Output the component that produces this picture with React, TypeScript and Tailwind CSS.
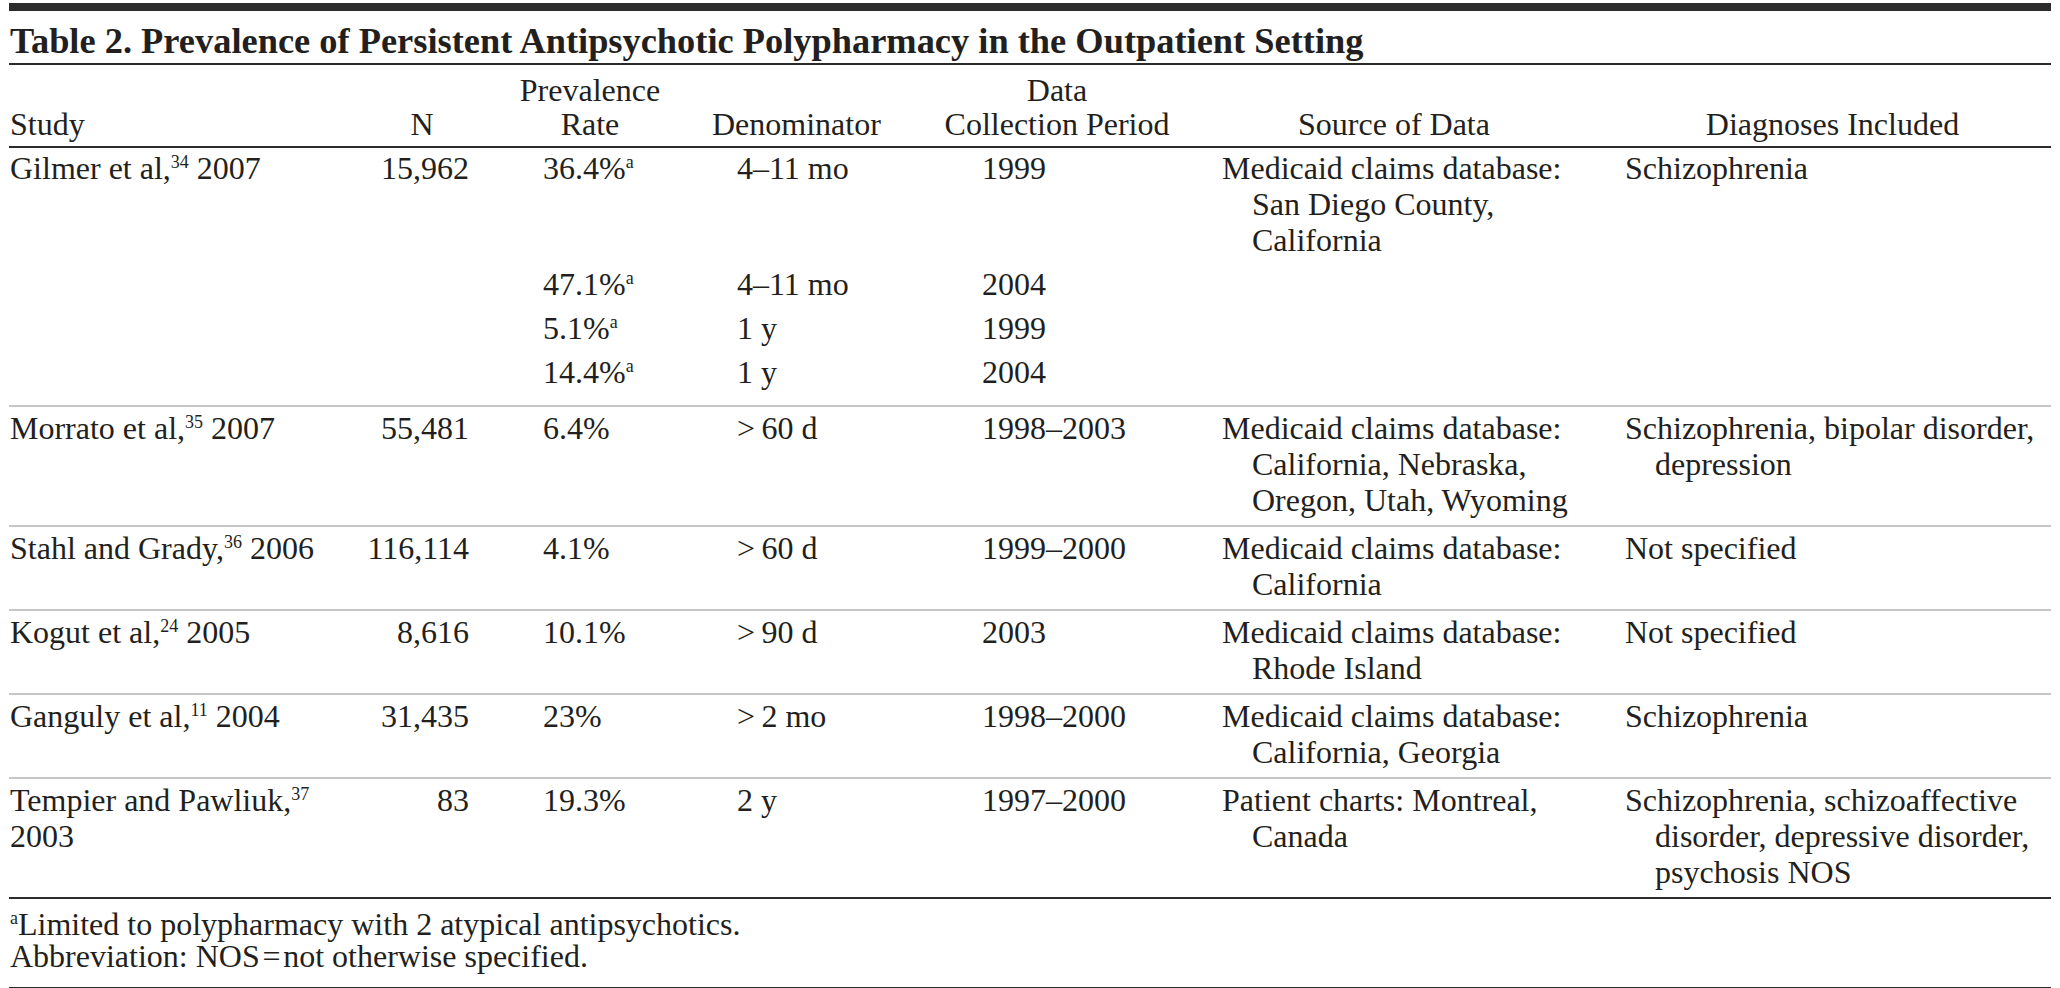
import React from 'react';

type Cell = React.ReactNode;

interface Row {
  study?: Cell[];
  n?: string;
  rate?: Cell;
  denom?: string;
  period?: string;
  source?: string[];
  diag?: string[];
  pad: string;
  rule: string;
}

const Sup = ({ children }: { children: React.ReactNode }) => (
  <sup className="text-[18px] -top-[11px]">{children}</sup>
);

const rows: Row[] = [
  {
    study: [<>Gilmer et al,<Sup>34</Sup> 2007</>],
    n: '15,962',
    rate: <>36.4%<Sup>a</Sup></>,
    denom: '4–11 mo',
    period: '1999',
    source: ['Medicaid claims database:', 'San Diego County,', 'California'],
    diag: ['Schizophrenia'],
    pad: 'pt-[2px] pb-[6px]',
    rule: '',
  },
  { rate: <>47.1%<Sup>a</Sup></>, denom: '4–11 mo', period: '2004', pad: 'pt-[2px] pb-[6px]', rule: '' },
  { rate: <>5.1%<Sup>a</Sup></>, denom: '1 y', period: '1999', pad: 'pt-[2px] pb-[6px]', rule: '' },
  {
    rate: <>14.4%<Sup>a</Sup></>,
    denom: '1 y',
    period: '2004',
    pad: 'pt-[2px] pb-[15px]',
    rule: 'border-b-2 border-[#c6c6c6]',
  },
  {
    study: [<>Morrato et al,<Sup>35</Sup> 2007</>],
    n: '55,481',
    rate: '6.4%',
    denom: '>\u200960 d',
    period: '1998–2003',
    source: ['Medicaid claims database:', 'California, Nebraska,', 'Oregon, Utah, Wyoming'],
    diag: ['Schizophrenia, bipolar disorder,', 'depression'],
    pad: 'pt-[3px] pb-[7px]',
    rule: 'border-b-2 border-[#c6c6c6]',
  },
  {
    study: [<>Stahl and Grady,<Sup>36</Sup> 2006</>],
    n: '116,114',
    rate: '4.1%',
    denom: '>\u200960 d',
    period: '1999–2000',
    source: ['Medicaid claims database:', 'California'],
    diag: ['Not specified'],
    pad: 'pt-[3px] pb-[7px]',
    rule: 'border-b-2 border-[#c6c6c6]',
  },
  {
    study: [<>Kogut et al,<Sup>24</Sup> 2005</>],
    n: '8,616',
    rate: '10.1%',
    denom: '>\u200990 d',
    period: '2003',
    source: ['Medicaid claims database:', 'Rhode Island'],
    diag: ['Not specified'],
    pad: 'pt-[3px] pb-[7px]',
    rule: 'border-b-2 border-[#c6c6c6]',
  },
  {
    study: [<>Ganguly et al,<Sup>11</Sup> 2004</>],
    n: '31,435',
    rate: '23%',
    denom: '>\u20092 mo',
    period: '1998–2000',
    source: ['Medicaid claims database:', 'California, Georgia'],
    diag: ['Schizophrenia'],
    pad: 'pt-[3px] pb-[7px]',
    rule: 'border-b-2 border-[#c6c6c6]',
  },
  {
    study: [<>Tempier and Pawliuk,<Sup>37</Sup></>, '2003'],
    n: '83',
    rate: '19.3%',
    denom: '2 y',
    period: '1997–2000',
    source: ['Patient charts: Montreal,', 'Canada'],
    diag: ['Schizophrenia, schizoaffective', 'disorder, depressive disorder,', 'psychosis NOS'],
    pad: 'pt-[3px] pb-[7px]',
    rule: 'border-b-2 border-[#2b2b2b]',
  },
];

// first line flush, the rest hang in
function Lines({ lines }: { lines?: string[] }) {
  if (!lines) return null;
  return (
    <>
      {lines.map((l, i) => (
        <div key={i} className={i > 0 ? 'pl-[30px]' : ''}>
          {l}
        </div>
      ))}
    </>
  );
}

export default function App() {
  return (
    <div className="min-h-screen bg-white px-[9px] pt-[3px] text-[#231f20] font-['Liberation_Serif',serif]">
      <div className="h-[8px] bg-[#2b2b2b]" />
      <h1 className="mt-[8px] h-[44px] pl-[1px] text-[36.4px] leading-[44px] font-bold whitespace-nowrap border-b-2 border-[#2b2b2b] box-content">
        Table 2. Prevalence of Persistent Antipsychotic Polypharmacy in the Outpatient Setting
      </h1>

      <table className="w-full table-fixed text-[32px] leading-[36px]">
        <colgroup>
          <col className="w-[355px]" />
          <col className="w-[116px]" />
          <col className="w-[220px]" />
          <col className="w-[176px]" />
          <col className="w-[338px]" />
          <col className="w-[320px]" />
          <col />
        </colgroup>
        <thead>
          <tr className="border-b-2 border-[#2b2b2b] text-[32px] leading-[34px]">
            <th className="pt-[8px] pb-[5px] pl-[1px] text-left font-normal align-bottom">Study</th>
            <th className="pt-[8px] pb-[5px] text-center font-normal align-bottom">N</th>
            <th className="pt-[8px] pb-[5px] text-center font-normal align-bottom">
              <div>Prevalence</div>
              <div>Rate</div>
            </th>
            <th className="pt-[8px] pb-[5px] pl-[12px] text-center font-normal align-bottom whitespace-nowrap">
              Denominator
            </th>
            <th className="pt-[8px] pb-[5px] pl-[24px] text-center font-normal align-bottom whitespace-nowrap">
              <div>Data</div>
              <div>Collection Period</div>
            </th>
            <th className="pt-[8px] pb-[5px] pl-[40px] text-center font-normal align-bottom whitespace-nowrap">
              Source of Data
            </th>
            <th className="pt-[8px] pb-[5px] pl-[80px] text-center font-normal align-bottom whitespace-nowrap">
              Diagnoses Included
            </th>
          </tr>
        </thead>
        <tbody>
          {rows.map((r, i) => (
            <tr key={i} className={r.rule}>
              <td className={`${r.pad} pl-[1px] align-top whitespace-nowrap`}>
                {r.study?.map((s, j) => <div key={j}>{s}</div>)}
              </td>
              <td className={`${r.pad} pr-[11px] text-right align-top`}>{r.n}</td>
              <td className={`${r.pad} pl-[63px] align-top whitespace-nowrap`}>{r.rate}</td>
              <td className={`${r.pad} pl-[37px] align-top whitespace-nowrap`}>{r.denom}</td>
              <td className={`${r.pad} pl-[106px] align-top whitespace-nowrap`}>{r.period}</td>
              <td className={`${r.pad} pl-[8px] align-top whitespace-nowrap`}>
                <Lines lines={r.source} />
              </td>
              <td className={`${r.pad} pl-[91px] align-top whitespace-nowrap`}>
                <Lines lines={r.diag} />
              </td>
            </tr>
          ))}
        </tbody>
      </table>

      <div className="border-b-2 border-[#2b2b2b] pt-[9px] pb-[15px] pl-[1px] text-[32px] leading-[32px]">
        <div>
          <sup className="text-[18px] -top-[11px]">a</sup>Limited to polypharmacy with 2 atypical antipsychotics.
        </div>
        <div>Abbreviation: NOS{'\u200a'}={'\u200a'}not otherwise specified.</div>
      </div>
    </div>
  );
}
